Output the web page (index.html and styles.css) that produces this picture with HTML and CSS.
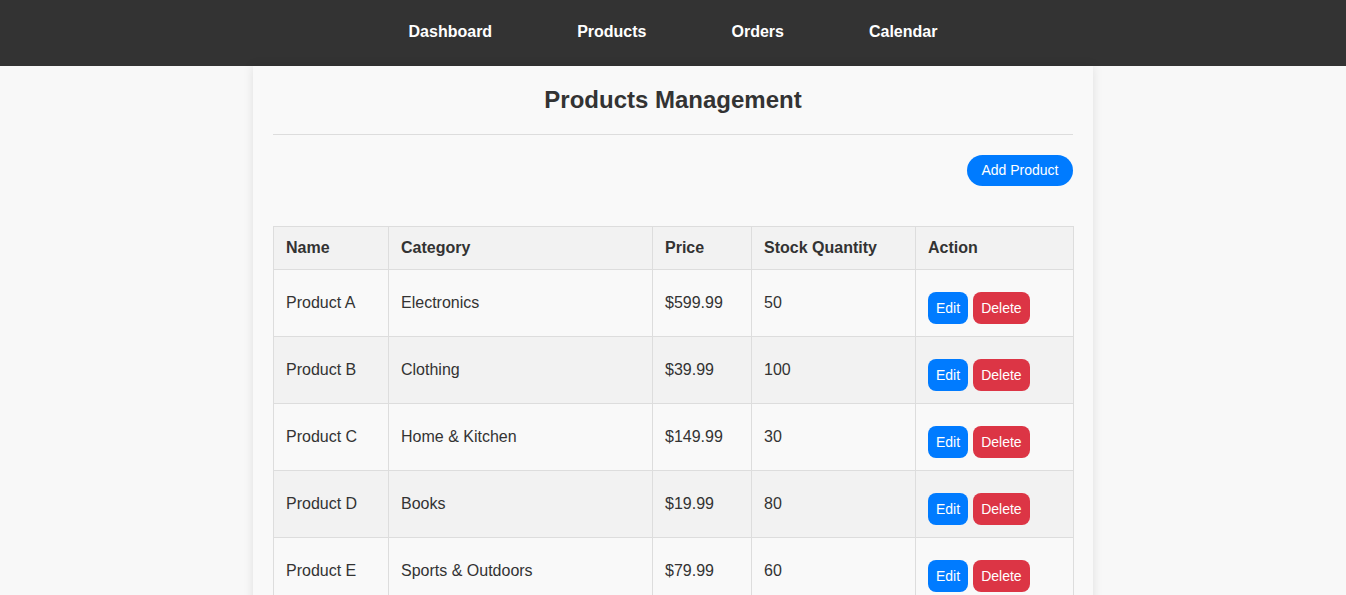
FILE: index.html
```html
<!DOCTYPE html>
<html lang="en">
<head>
<meta charset="utf-8">
<title>Products Management</title>
<link rel="stylesheet" href="styles.css">
</head>
<body>
<header class="topbar">
  <nav class="nav">
    <a class="nav-link" href="#">Dashboard</a>
    <a class="nav-link" href="#">Products</a>
    <a class="nav-link" href="#">Orders</a>
    <a class="nav-link" href="#">Calendar</a>
  </nav>
</header>
<main class="container">
  <div class="page-head">
    <h2 class="page-title">Products Management</h2>
  </div>
  <div class="toolbar">
    <button class="btn btn-add">Add Product</button>
  </div>
  <table class="products">
    <colgroup>
      <col class="c-name"><col class="c-cat"><col class="c-price"><col class="c-stock"><col class="c-action">
    </colgroup>
    <thead>
      <tr><th>Name</th><th>Category</th><th>Price</th><th>Stock Quantity</th><th>Action</th></tr>
    </thead>
    <tbody>
      <tr><td>Product A</td><td>Electronics</td><td>$599.99</td><td>50</td><td><div class="actions"><button class="btn btn-edit">Edit</button><button class="btn btn-delete">Delete</button></div></td></tr>
      <tr><td>Product B</td><td>Clothing</td><td>$39.99</td><td>100</td><td><div class="actions"><button class="btn btn-edit">Edit</button><button class="btn btn-delete">Delete</button></div></td></tr>
      <tr><td>Product C</td><td>Home &amp; Kitchen</td><td>$149.99</td><td>30</td><td><div class="actions"><button class="btn btn-edit">Edit</button><button class="btn btn-delete">Delete</button></div></td></tr>
      <tr><td>Product D</td><td>Books</td><td>$19.99</td><td>80</td><td><div class="actions"><button class="btn btn-edit">Edit</button><button class="btn btn-delete">Delete</button></div></td></tr>
      <tr><td>Product E</td><td>Sports &amp; Outdoors</td><td>$79.99</td><td>60</td><td><div class="actions"><button class="btn btn-edit">Edit</button><button class="btn btn-delete">Delete</button></div></td></tr>
    </tbody>
  </table>
</main>
</body>
</html>
```
FILE: styles.css
```css
* { box-sizing: border-box; }
html, body { margin: 0; padding: 0; }
body {
  background: #f8f8f8;
  font-family: "Liberation Sans", Arial, sans-serif;
  color: #333;
}
.topbar {
  background: #333;
  height: 66px;
  padding-top: 23px;
}
.nav {
  display: flex;
  justify-content: center;
  gap: 85px;
}
.nav-link {
  color: #fff;
  font-weight: bold;
  font-size: 16px;
  line-height: 18px;
  text-decoration: none;
}
.container {
  width: 840px;
  margin: 0 auto;
  padding: 20px;
  background: #f9f9f9;
  box-shadow: 0 0 10px rgba(0,0,0,0.1);
  min-height: 600px;
}
.page-head {
  border-bottom: 1px solid #ddd;
  padding-bottom: 20px;
}
.page-title {
  margin: 0;
  text-align: center;
  font-size: 24px;
  line-height: 28px;
  font-weight: bold;
  color: #333;
}
.toolbar {
  display: flex;
  justify-content: flex-end;
  margin: 20px 0 40px;
}
.btn {
  font-family: "Liberation Sans", Arial, sans-serif;
  font-size: 14px;
  line-height: 16px;
  color: #fff;
  border: none;
  cursor: pointer;
}
.btn-add {
  background: #007bff;
  padding: 7px 14.5px 8px;
  border-radius: 16px;
}
.products {
  width: 800px;
  border-collapse: collapse;
  table-layout: fixed;
  font-size: 16px;
}
.c-name { width: 115px; }
.c-cat { width: 264px; }
.c-price { width: 99px; }
.c-stock { width: 164px; }
.c-action { width: 158px; }
.products th, .products td {
  border: 1px solid #ddd;
  padding: 12px;
  text-align: left;
  line-height: 18px;
}
.products th {
  background: #f2f2f2;
  font-weight: bold;
}
.products tbody tr:nth-child(odd) { background: #f9f9f9; }
.products tbody tr:nth-child(even) { background: #f2f2f2; }
.actions {
  display: flex;
  gap: 5px;
  padding-top: 10px;
}
.btn-edit, .btn-delete {
  padding: 8px;
  border-radius: 8px;
}
.btn-edit { background: #007bff; }
.btn-delete { background: #dc3545; }
```
